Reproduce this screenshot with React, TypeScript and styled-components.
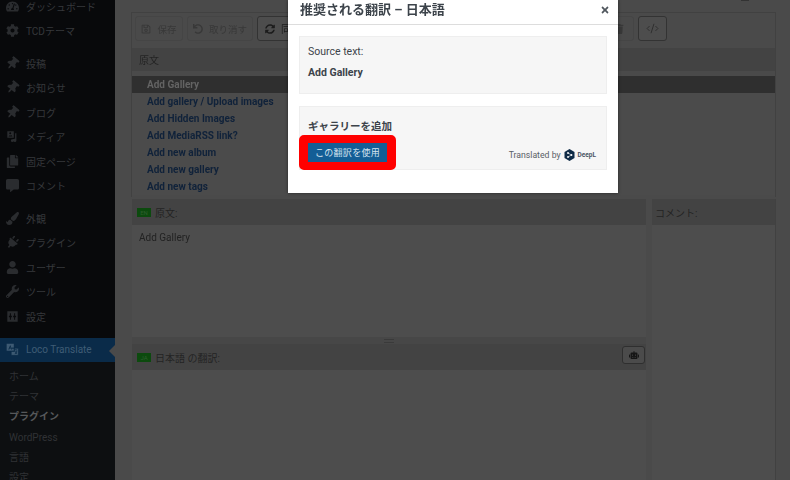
import styled, { createGlobalStyle } from "styled-components";
import { CodeXml } from "lucide-react";
import {
  FaTachometerAlt, FaCog, FaThumbtack, FaCopy, FaCommentAlt, FaPaintBrush, FaPlug,
  FaUser, FaWrench, FaRegSave, FaUndo, FaSyncAlt, FaRobot, FaTimes, FaTrash,
} from "react-icons/fa";

const GlobalStyle = createGlobalStyle`
  html, body { margin: 0; padding: 0; background: #4a4a4a; overflow: hidden; }
  body { font-family: Roboto, "Noto Sans CJK JP", sans-serif; }
`;

const Page = styled.div`
  position: relative;
  display: grid;
  grid-template-columns: 115px 1fr;
  width: 790px;
  height: 480px;
  overflow: hidden;
  filter: blur(0.35px);
`;

const Sidebar = styled.nav`
  background: #08090b;
  display: flex;
  flex-direction: column;
  margin-top: -6px;
`;

const MenuItem = styled.div<{ $gap?: number }>`
  display: flex;
  align-items: center;
  flex: none;
  height: 24.5px;
  margin-top: ${(p) => p.$gap ?? 0}px;
  padding-left: 6px;
  gap: 7px;
  font-size: 10px;
  color: #36383b;
  svg { width: 13px; height: 13px; flex: none; color: #2a2c2f; }
`;

const TiltedIcon = styled.span`
  display: flex;
  transform: rotate(40deg);
`;

const ActiveItem = styled(MenuItem)`
  position: relative;
  background: #0a2b49;
  color: #3f5c75;
  svg { color: #3d5a73; }
  &::after {
    content: "";
    position: absolute;
    right: 0;
    top: 7px;
    border: 6px solid transparent;
    border-right-color: #4a4a4a;
    border-left: 0;
  }
`;

const SubMenu = styled.div`
  background: #0d0f11;
  padding-top: 5px;
  flex: 1;
`;

const SubItem = styled.div<{ $current?: boolean }>`
  height: 20.2px;
  line-height: 20.2px;
  padding-left: 9px;
  font-size: 10px;
  color: ${(p) => (p.$current ? "#56585a" : "#303235")};
  font-weight: ${(p) => (p.$current ? 700 : 400)};
`;

const Main = styled.main`
  position: relative;
  padding: 12px 14px 0 16px;
  min-width: 0;
`;

const TopMark = styled.div`
  position: absolute;
  top: 0;
  left: 626px;
  width: 8px;
  height: 1px;
  background: #333;
`;

const EditorBox = styled.section`
  border: 1px solid #414141;
  border-bottom: 0;
  height: 184px;
`;

const Toolbar = styled.div`
  display: flex;
  height: 35px;
  padding: 3px 3px 0;
  gap: 4px;
  box-sizing: border-box;
`;

const ToolButton = styled.div<{ $width: number; $strong?: boolean }>`
  display: flex;
  align-items: center;
  justify-content: center;
  gap: 6px;
  width: ${(p) => p.$width}px;
  height: 25px;
  box-sizing: border-box;
  border: 1px solid ${(p) => (p.$strong ? "#333" : "#454545")};
  border-radius: 3px;
  background: ${(p) => (p.$strong ? "#4d4d4d" : "#4a4a4a")};
  font-size: 9.5px;
  color: ${(p) => (p.$strong ? "#1c1c1c" : "#383838")};
  svg { width: 10px; height: 10px; flex: none; }
`;

const SyncButton = styled(ToolButton)`
  justify-content: flex-start;
  padding-left: 7px;
  font-size: 10px;
`;

const CodeButton = styled(ToolButton)`
  color: #2a2a2a;
  svg { width: 13px; height: 13px; }
`;

const ToolSpacer = styled.div<{ $width?: number }>`
  flex: ${(p) => (p.$width ? `0 0 ${p.$width}px` : 1)};
`;

const ListHeader = styled.div`
  display: flex;
  align-items: center;
  height: 23px;
  padding-left: 7px;
  background: #434343;
  font-size: 10px;
  color: #242424;
`;

const MessageList = styled.ul`
  list-style: none;
  margin: 5px 0 0;
  padding: 0;
`;

const MessageRow = styled.li<{ $selected?: boolean }>`
  height: 17px;
  line-height: 17px;
  padding-left: 15px;
  font-size: 10px;
  font-weight: 700;
  background: ${(p) => (p.$selected ? "#2f2f2f" : "#4b4b4b")};
  color: ${(p) => (p.$selected ? "#636363" : "#10223a")};
`;

const Panes = styled.div`
  display: grid;
  grid-template-columns: 514px 1fr;
  column-gap: 6px;
  margin: 2px 0 0 1px;
  border-right: 1px solid #414141;
`;

const PaneColumn = styled.div`
  display: flex;
  flex-direction: column;
  height: 282px;
`;

const PaneHeader = styled.div`
  position: relative;
  display: flex;
  align-items: center;
  flex: none;
  gap: 4px;
  height: 26px;
  padding-left: 5px;
  background: #434343;
  font-size: 10px;
  color: #242424;
`;

const CommentHeader = styled(PaneHeader)`
  padding-left: 3px;
`;

const LangBadge = styled.span`
  width: 14px;
  height: 9px;
  line-height: 9px;
  background: #0c4a0e;
  color: #2d5f2e;
  font-size: 6px;
  text-align: center;
`;

const PaneBody = styled.div<{ $height?: number }>`
  flex: ${(p) => (p.$height ? "none" : 1)};
  height: ${(p) => (p.$height ? `${p.$height}px` : "auto")};
  box-sizing: border-box;
  padding: 7px 7px 0;
  background: #4d4d4d;
  font-size: 10px;
  line-height: 12px;
  color: #222;
`;

const Splitter = styled.div`
  display: flex;
  align-items: center;
  justify-content: center;
  height: 7px;
  flex: none;
  background: #474747;
  &::after {
    content: "";
    width: 10px;
    height: 2px;
    border-top: 1px solid #3a3a3a;
    border-bottom: 1px solid #3a3a3a;
  }
`;

const RobotButton = styled.div`
  position: absolute;
  right: 1px;
  top: 2px;
  display: flex;
  align-items: center;
  justify-content: center;
  width: 23px;
  height: 18px;
  box-sizing: border-box;
  border: 1px solid #2f2f2f;
  border-radius: 3px;
  background: #4b4b4b;
  color: #161616;
  svg { width: 10px; height: 10px; }
`;

/* modal lies over the dimmed page */
const Modal = styled.div`
  position: absolute;
  left: 288px;
  top: 0;
  width: 330px;
  height: 193px;
  background: #fff;
  box-shadow: 0 0 3px rgba(0, 0, 0, 0.5);
`;

const ModalHeader = styled.header`
  display: flex;
  align-items: center;
  justify-content: space-between;
  height: 24px;
  padding: 0 12px;
  border-bottom: 1px solid #ddd;
  font-size: 13px;
  line-height: 20px;
  font-weight: 700;
  color: #3c434a;
  span { margin-top: -4px; }
  svg { width: 10px; height: 10px; color: #50575e; margin: -4px -4px 0 0; }
`;

const ModalBody = styled.div`
  display: flex;
  flex-direction: column;
  gap: 12px;
  padding: 11px 11px 0;
`;

const Notice = styled.div`
  background: #f6f6f6;
  border: 1px solid #eee;
  height: 58px;
  box-sizing: border-box;
  color: #3c434a;
`;

const SourceLabel = styled.p`
  margin: 9px 8px 0;
  font-size: 10.5px;
  line-height: 12px;
`;

const SourceText = styled.p`
  margin: 9px 8px 0;
  font-size: 10.5px;
  line-height: 12px;
  font-weight: 700;
`;

const SuggestionBox = styled(Notice)`
  height: 64px;
  display: flex;
  flex-direction: column;
  justify-content: space-between;
`;

const SuggestionText = styled.p`
  margin: 14px 8px 0;
  font-size: 10.5px;
  line-height: 12px;
  font-weight: 700;
`;

const ActionRow = styled.div`
  display: flex;
  align-items: center;
  justify-content: space-between;
  padding-right: 10px;
  margin: 0 0 -1px -1px;
`;

const Highlight = styled.div`
  border: solid #ff0000;
  border-width: 8px 9px;
  border-radius: 5px;
`;

const UseButton = styled.button`
  display: block;
  width: 79px;
  height: 19px;
  padding: 0;
  border: 0;
  background: #135e96;
  color: #d5e3ef;
  font-family: inherit;
  font-size: 9px;
  letter-spacing: 0.3px;
`;

const Credit = styled.div`
  display: flex;
  align-items: center;
  gap: 3px;
  margin-top: 4px;
  font-size: 8.7px;
  color: #5a6066;
`;

const DeepLName = styled.span`
  font-size: 6.5px;
  font-weight: 700;
  color: #4a5563;
`;

const MediaIcon = () => (
  <svg viewBox="0 0 20 20" fill="currentColor">
    <path d="M2 2h10v10H2zM5 5a1.5 1.5 0 1 0 3 0 1.5 1.5 0 0 0-3 0zM4 10h6L8 7.500 6.500 9 5.500 8z" fillRule="evenodd" />
    <path d="M14 5h2v11a2.500 2.500 0 1 1-2-2.400V5zM10 14h1.500v2.500a2 2 0 1 1-1.500-2z" />
  </svg>
);

const SettingsIcon = () => (
  <svg viewBox="0 0 20 20" fill="currentColor">
    <path
      fillRule="evenodd"
      d="M2 2h16v16H2zM6 5v4H4.500v2H6v4h1.500v-4H9V9H7.500V5zM12.500 5v4H11v2h1.500v4H14v-4h1.500V9H14V5z"
    />
  </svg>
);

const TranslateIcon = () => (
  <svg viewBox="0 0 20 20" fill="currentColor">
    <path fillRule="evenodd" d="M1 1h11v11H1zM6.500 3 3.500 10h1.500l.6-1.500h1.800l.6 1.500h1.500zM6 7.300l.5-1.500.5 1.500z" />
    <path fillRule="evenodd" d="M9 8h10v11H8v-6h5V8zM13 10.500h4M15 9.500v1M13.500 16.500c2 0 3-2 3.200-5M14 12.500c.5 2 1.500 3.500 3 4" stroke="#0a2b49" strokeWidth="1" />
  </svg>
);

const primaryMenu = [
  { icon: <FaTachometerAlt />, label: "ダッシュボード" },
  { icon: <FaCog />, label: "TCDテーマ" },
  { icon: <TiltedIcon><FaThumbtack /></TiltedIcon>, label: "投稿", gap: 8 },
  { icon: <TiltedIcon><FaThumbtack /></TiltedIcon>, label: "お知らせ" },
  { icon: <TiltedIcon><FaThumbtack /></TiltedIcon>, label: "ブログ" },
  { icon: <MediaIcon />, label: "メディア" },
  { icon: <FaCopy />, label: "固定ページ" },
  { icon: <FaCommentAlt />, label: "コメント" },
  { icon: <FaPaintBrush />, label: "外観", gap: 8 },
  { icon: <TiltedIcon><FaPlug /></TiltedIcon>, label: "プラグイン" },
  { icon: <FaUser />, label: "ユーザー" },
  { icon: <FaWrench />, label: "ツール" },
  { icon: <SettingsIcon />, label: "設定" },
];

const subMenu = ["ホーム", "テーマ", "プラグイン", "WordPress", "言語", "設定"];

const messages = [
  "Add Gallery",
  "Add gallery / Upload images",
  "Add Hidden Images",
  "Add MediaRSS link?",
  "Add new album",
  "Add new gallery",
  "Add new tags",
];

export default function App() {
  return (
    <Page>
      <GlobalStyle />
      <Sidebar>
        {primaryMenu.map((item) => (
          <MenuItem key={item.label} $gap={item.gap}>
            {item.icon}
            {item.label}
          </MenuItem>
        ))}
        <ActiveItem $gap={9}>
          <TranslateIcon />
          Loco Translate
        </ActiveItem>
        <SubMenu>
          {subMenu.map((label) => (
            <SubItem key={label} $current={label === "プラグイン"}>
              {label}
            </SubItem>
          ))}
        </SubMenu>
      </Sidebar>

      <Main>
        <TopMark />
        <EditorBox>
          <Toolbar>
            <ToolButton $width={48}><FaRegSave />保存</ToolButton>
            <ToolButton $width={66}><FaUndo />取り消す</ToolButton>
            <SyncButton $width={100} $strong><FaSyncAlt />同期</SyncButton>
            <ToolSpacer />
            <ToolButton $width={30}><FaTrash /></ToolButton>
            <CodeButton $width={29} $strong><CodeXml strokeWidth={1.6} /></CodeButton>
            <ToolSpacer $width={101} />
          </Toolbar>
          <ListHeader>原文</ListHeader>
          <MessageList>
            {messages.map((text, i) => (
              <MessageRow key={text} $selected={i === 0}>{text}</MessageRow>
            ))}
          </MessageList>
        </EditorBox>
        <Panes>
          <PaneColumn>
            <PaneHeader><LangBadge>EN</LangBadge>原文:</PaneHeader>
            <PaneBody $height={112}>Add Gallery</PaneBody>
            <Splitter />
            <PaneHeader>
              <LangBadge>JA</LangBadge>日本語 の翻訳:
              <RobotButton><FaRobot /></RobotButton>
            </PaneHeader>
            <PaneBody />
          </PaneColumn>
          <PaneColumn>
            <CommentHeader>コメント:</CommentHeader>
            <PaneBody />
          </PaneColumn>
        </Panes>
      </Main>

      <Modal>
        <ModalHeader>
          <span>推奨される翻訳 – 日本語</span>
          <FaTimes />
        </ModalHeader>
        <ModalBody>
          <Notice>
            <SourceLabel>Source text:</SourceLabel>
            <SourceText>Add Gallery</SourceText>
          </Notice>
          <SuggestionBox>
            <SuggestionText>ギャラリーを追加</SuggestionText>
            <ActionRow>
              <Highlight>
                <UseButton>この翻訳を使用</UseButton>
              </Highlight>
              <Credit>
                Translated by
                <svg width="11" height="12" viewBox="0 0 22 24">
                  <path d="M11 0 21 6v12l-10 6-10-6V6z" fill="#0f2b46" />
                  <circle cx="8" cy="8" r="1.8" fill="#fff" />
                  <circle cx="8" cy="16" r="1.8" fill="#fff" />
                  <circle cx="15" cy="12" r="1.8" fill="#fff" />
                  <path d="M8 8l7 4-7 4" stroke="#fff" strokeWidth="1.2" fill="none" />
                </svg>
                <DeepLName>DeepL</DeepLName>
              </Credit>
            </ActionRow>
          </SuggestionBox>
        </ModalBody>
      </Modal>
    </Page>
  );
}
